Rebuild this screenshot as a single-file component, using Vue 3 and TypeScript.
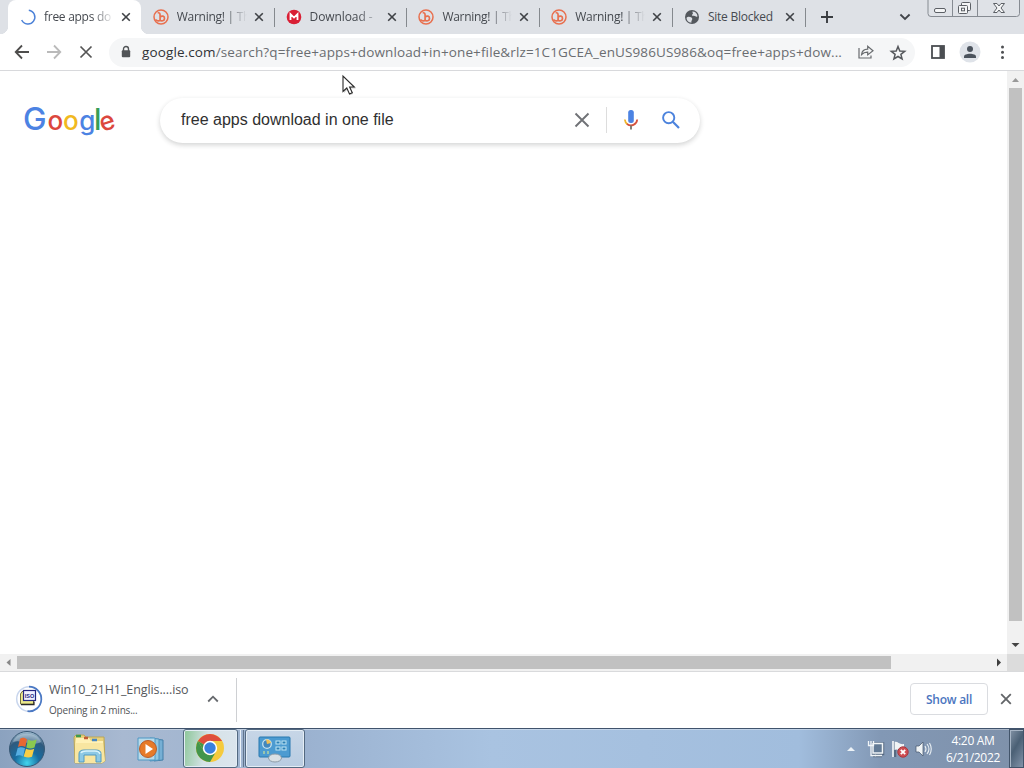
<script setup lang="ts">
interface Tab {
  icon: 'spinner' | 'bit' | 'mega' | 'globe'
  title: string
  kind: string
}

const tabs: Tab[] = [
  { icon: 'spinner', title: 'free apps do', kind: 'active' },
  { icon: 'bit', title: 'Warning! | Th', kind: '' },
  { icon: 'mega', title: 'Download - ', kind: 'download' },
  { icon: 'bit', title: 'Warning! | Th', kind: '' },
  { icon: 'bit', title: 'Warning! | Th', kind: '' },
  { icon: 'globe', title: 'Site Blocked', kind: 'blocked' },
]

const logo = [
  { char: 'G', x: -0.9, y: 28, size: 31.5, color: '#4c83e3', turn: 0 },
  { char: 'o', x: 23.4, y: 28, size: 26, color: '#dc473d', turn: 0 },
  { char: 'o', x: 39, y: 28, size: 26, color: '#f1b91f', turn: 0 },
  { char: 'g', x: 55.2, y: 28, size: 26, color: '#4c83e3', turn: 0 },
  { char: 'l', x: 70, y: 28, size: 29.5, color: '#369d57', turn: 0 },
  { char: 'e', x: 78.2, y: 30, size: 26, color: '#dc473d', turn: -18 },
]
</script>

<template>
  <div class="screen">
    <header class="tabstrip">
      <div v-for="(tab, i) in tabs" :key="i" class="tab" :class="tab.kind">
        <svg class="favicon" viewBox="0 0 16 16">
          <path v-if="tab.icon === 'spinner'" d="M8.8 1.2A6.9 6.9 0 1 1 1.7 11" fill="none" stroke="#4c82d8" stroke-width="1.5" />
          <g v-else-if="tab.icon === 'bit'" fill="none" stroke="#e8704f">
            <circle cx="8" cy="8" r="7" stroke-width="1.5" />
            <path d="M4.700 3.800Q7.300 3.300 7.100 7V11.500M7 8.200C8.800 6.200 11.800 7 11.500 9.600C11.300 12 8.500 12.600 7.100 11C6 12.500 3.800 11.800 2.500 10.500" stroke-width="1.700" />
          </g>
          <g v-else-if="tab.icon === 'mega'">
            <circle cx="8" cy="8" r="7.3" fill="#d91f35" />
            <path d="M4.500 11V5.2L8 8.600L11.500 5.200V11" fill="none" stroke="#fff" stroke-width="1.800" />
          </g>
          <g v-else>
            <circle cx="8" cy="8" r="7" fill="#54585d" />
            <path d="M2.6 8.800C4 6.800 7.700 7.800 8.200 9.500C8.700 11.200 6.800 11.500 7.700 13.600C4.800 13.800 2.400 11.500 2.600 8.800ZM8.400 2.600C11 2.500 13.200 4.600 13.500 7.200C12.200 8.800 11.400 6.500 9.600 6.800C7.800 7 7.400 5.800 8.700 4.900C9.600 4.300 8 3.700 8.400 2.600Z" fill="#dee1e6" />
          </g>
        </svg>
        <span class="tab-title">{{ tab.title }}</span>
        <svg class="tab-close" viewBox="0 0 10 10"><path d="M1.2 1.2L8.8 8.8M8.8 1.2L1.2 8.8" /></svg>
      </div>
      <svg class="new-tab" viewBox="0 0 14 14"><path d="M7 1V13M1 7H13" /></svg>
      <svg class="tab-search" viewBox="0 0 12 8"><path d="M1.4 1.5L6 6L10.6 1.5" /></svg>
      <svg class="window-buttons" viewBox="0 0 94 18">
        <path d="M1 0V13.5Q1 16.5 4 16.5H89.500Q92.500 16.500 92.500 13.500V0" fill="#dfe2e7" stroke="#868b92" />
        <path d="M25.500 0V16M50.500 0V16" stroke="#868b92" />
        <g fill="#f4f5f6" stroke="#5c6066">
          <rect x="7.500" y="8.500" width="11" height="4" rx="1.500" />
          <rect x="34.500" y="2.500" width="9" height="8" rx="1" />
          <rect x="31.500" y="5.500" width="9" height="8" rx="1" />
          <rect x="34.500" y="8.200" width="3" height="2.600" />
          <path d="M66.500 3.500H70L72 6L74 3.500H77.500L74 8L77.500 12.500H74L72 10L70 12.500H66.500L70 8Z" />
        </g>
      </svg>
    </header>

    <nav class="toolbar">
      <svg class="nav-icons" viewBox="0 0 109 36" fill="none" stroke-width="1.8">
        <path d="M29 18H16M22 11.500L15.700 18L22 24.500" stroke="#4e4d4c" />
        <path d="M47 18H60M54 11.500L60.300 18L54 24.500" stroke="#bababa" />
        <path d="M80.500 12.500L91.500 23.500M91.500 12.500L80.500 23.500" stroke="#555" stroke-width="1.700" />
      </svg>
      <div class="omnibox">
        <svg class="lock" viewBox="0 0 10 14"><path d="M2.500 6V4a2.500 2.500 0 0 1 5 0V6" fill="none" stroke="#515457" stroke-width="1.400" /><rect x=".8" y="5.300" width="8.400" height="7" rx="1" fill="#515457" /></svg>
        <span class="url"><b>google.com</b>/search?q=free+apps+download+in+one+file&amp;rlz=1C1GCEA_enUS986US986&amp;oq=free+apps+dow...</span>
        <svg class="share" viewBox="0 0 16 16" fill="none" stroke="#686b6e" stroke-width="1.200"><path d="M1 4V14H13V11.500M3.600 10.500C4 6.600 6.400 5.300 9.700 5.200V2.300L15 6.800L9.700 10.900V8.100C7 8 5.200 8.800 3.600 10.500Z" /></svg>
        <svg class="star" viewBox="0 0 16 16"><path d="M8 1.500L9.800 6L14.700 6.300L10.900 9.400L12.100 14L8 11.500L3.900 14L5.100 9.400L1.300 6.300L6.200 6Z" fill="none" stroke="#55585c" stroke-width="1.500" /></svg>
      </div>
      <svg class="toolbar-icons" viewBox="0 0 109 36">
        <rect x="17" y="12" width="12" height="12" fill="#fff" stroke="#4b4e52" stroke-width="1.800" />
        <rect x="24.500" y="12" width="4.500" height="12" fill="#4b4e52" />
        <circle cx="55" cy="18" r="10.500" fill="#dfe3e9" />
        <circle cx="55" cy="15" r="3" fill="#4b535d" />
        <path d="M49 24V22.500C49 18.800 61 18.800 61 22.500V24Z" fill="#4b535d" />
        <circle cx="87.500" cy="13" r="1.500" fill="#4e5053" /><circle cx="87.500" cy="18.300" r="1.500" fill="#4e5053" /><circle cx="87.500" cy="23.500" r="1.500" fill="#4e5053" />
      </svg>
    </nav>

    <main class="viewport">
      <section class="page">
        <svg class="logo" viewBox="0 0 96 40">
          <text><tspan v-for="(l, i) in logo" :key="i" :x="l.x" :y="l.y" :rotate="l.turn" :font-size="l.size" :fill="l.color">{{ l.char }}</tspan></text>
        </svg>
        <div class="search-box">
          <span class="query">free apps download in one file</span>
          <svg class="clear" viewBox="0 0 16 16"><path d="M1.500 1.500L14.500 14.500M14.500 1.500L1.500 14.500" stroke="#707276" stroke-width="1.900" /></svg>
          <i class="divider"></i>
          <svg class="mic" viewBox="0 0 16 22">
            <rect x="5.200" y="1" width="5.600" height="13" rx="2.500" fill="#4c83e3" />
            <path d="M1.800 10.500Q2.100 13.500 4.500 15.300" fill="none" stroke="#efb42c" stroke-width="1.800" />
            <path d="M4 15C8 18 13.700 16 14.200 10.500" fill="none" stroke="#d5523d" stroke-width="1.800" />
            <path d="M8 16.500V20.500" stroke="#77746a" stroke-width="1.800" />
          </svg>
          <svg class="magnifier" viewBox="0 0 20 20"><circle cx="7.700" cy="7.700" r="5.600" fill="none" stroke="#4c83dd" stroke-width="1.900" /><path d="M11.800 11.800L18 18" stroke="#4c83dd" stroke-width="2.200" /></svg>
        </div>
      </section>
      <aside class="vscroll">
        <svg viewBox="0 0 17 17"><path d="M5 11L8.500 7L12 11Z" fill="#999" /></svg>
        <i class="vthumb"></i>
        <svg viewBox="0 0 17 17"><path d="M4.500 6H12.500L8.500 10Z" fill="#444" /></svg>
      </aside>
      <svg class="pointer" viewBox="0 0 16 22">
        <path d="M2 3V18L5.500 14.500L8.500 20L11 19L8.500 13.500H14Z" fill="#777" opacity=".35" />
        <path d="M1 1V16.500L4.800 13L7.500 19L10.300 17.700L7.600 12H12.300Z" fill="#fff" stroke="#292929" stroke-width="1.100" />
      </svg>
    </main>
    <div class="hscroll">
      <svg viewBox="0 0 17 17"><path d="M10.500 5V12L6.500 8.500Z" fill="#888" /></svg>
      <i class="hthumb"></i>
      <svg viewBox="0 0 17 17"><path d="M7 4.500V12.500L11 8.500Z" fill="#3d3d3d" /></svg>
      <i class="corner"></i>
    </div>

    <section class="downloads">
      <svg class="iso" viewBox="0 0 28 28">
        <circle cx="14" cy="14" r="12.300" fill="#fff" stroke="#c9d6ed" stroke-width="1.500" />
        <path d="M14 1.700A12.300 12.300 0 1 1 12.500 26.200" fill="none" stroke="#4b79c4" stroke-width="1.700" />
        <path d="M5.500 9V19H18.500V15H9V6.500H7Z" fill="#ece98b" stroke="#77723d" />
        <path d="M6 19.700H19V16.500" fill="none" stroke="#292929" stroke-width="1.200" />
        <rect x="8.500" y="5.500" width="12" height="10" fill="#eef0ff" stroke="#242681" stroke-width="1.200" />
        <text x="14.500" y="12.800" text-anchor="middle">ISO</text>
      </svg>
      <div class="file"><span class="filename">Win10_21H1_Englis....iso</span><span class="status">Opening in 2 mins...</span></div>
      <svg class="chevron" viewBox="0 0 12 8"><path d="M1.200 6.500L6 1.700L10.800 6.500" /></svg>
      <i class="download-rule"></i>
      <button class="show-all">Show all</button>
      <svg class="shelf-close" viewBox="0 0 12 12"><path d="M1.200 1.200L10.800 10.800M10.800 1.200L1.200 10.800" /></svg>
    </section>

    <footer class="taskbar">
      <div class="start">
        <svg viewBox="0 0 38 38">
          <defs>
            <radialGradient id="orb" cx=".5" cy=".9" r=".9"><stop stop-color="#42d5ed" /><stop offset=".4" stop-color="#176ca0" /><stop offset=".75" stop-color="#305a7d" /><stop offset="1" stop-color="#a9c5d8" /></radialGradient>
          </defs>
          <circle cx="19" cy="19" r="17.500" fill="url(#orb)" stroke="#375875" />
          <path d="M5 12C8 1 30 1 33 12C25 17 13 9 5 12Z" fill="#d9e7ef" opacity=".4" />
          <path d="M12 9C15 7 17 8 19 9.300L17.300 17C15 15.500 12.500 15.500 10 17Z" fill="#e86832" />
          <path d="M20 9.500C23 11.300 26 10.800 28.700 9.500L26.500 17.500C23 19 21 18.500 18.300 17.500Z" fill="#8bc950" />
          <path d="M9.700 18C12 16.700 14.500 17 17 18.300L15 26.500C12.500 24.700 10 25 7.500 26.300Z" fill="#56aee2" />
          <path d="M18 18.700C21 20.200 23.500 20 26.200 18.700L24 26.800C21 28 18.500 27.500 15.700 26.500Z" fill="#f8ce45" />
        </svg>
      </div>
      <svg class="explorer" viewBox="0 0 36 34">
        <path d="M2 3L4 1H12L14 3H32L33 27L30 29H3Z" fill="#e8d17b" stroke="#b9a65a" />
        <path d="M4 4H17L19 7H31V11H3Z" fill="#fff1b6" />
        <path d="M4 2H9" stroke="#3d9a50" stroke-width="2.500" /><path d="M12 4H16" stroke="#c25a35" stroke-width="2.500" /><path d="M20 6H25" stroke="#4787c2" stroke-width="2.500" />
        <path d="M3 9H31L33 27L30 29H3Z" fill="#f8e6a1" />
        <path d="M7 28V20Q7 16 12 16H24Q29 16 29 20V28H24V21H12V28Z" fill="#8dc9e5" stroke="#4e99c2" />
        <path d="M9 19Q10 17 14 17H23Q27 17 28 20" stroke="#d9f3fb" fill="none" stroke-width="1.500" />
      </svg>
      <svg class="player" viewBox="0 0 30 28">
        <path d="M17 4L26 5V25L17 26Z" fill="#76afd4" stroke="#427fa9" />
        <path d="M13 3L22 4V25L13 26Z" fill="#94c8e1" stroke="#4e93bd" />
        <path d="M1 3H18V25H1Z" fill="#b9dbea" stroke="#4e98c4" />
        <circle cx="11" cy="14" r="8.500" fill="#e77b29" stroke="#b95d2b" /><path d="M8.500 9L16 14L8.500 19Z" fill="#fff" />
      </svg>
      <div class="task chrome-task">
        <svg viewBox="0 0 30 30">
          <circle cx="15" cy="15" r="14" fill="#f5ca3d" />
          <path d="M15 15L2.900 8A14 14 0 0 1 27.100 8H15Z" fill="#df4f3c" />
          <path d="M2.900 8A14 14 0 0 0 15 29L21.100 18.500A7 7 0 0 1 9 18.500Z" fill="#42954b" />
          <path d="M2.900 8L9 18.500L15 15Z" fill="#42954b" />
          <circle cx="15" cy="15" r="7.200" fill="#fff" /><circle cx="15" cy="15" r="5.700" fill="#3980de" />
        </svg>
      </div>
      <div class="task control-task">
        <svg viewBox="0 0 34 30">
          <rect x="1" y="3" width="31" height="20" rx="1" fill="#4c9bd1" stroke="#2978af" />
          <circle cx="9" cy="10" r="4.300" fill="#4287bd" stroke="#c6e2ef" stroke-width="1.300" /><path d="M9 10L8 5.500A4.500 4.500 0 0 1 13 9Z" fill="#efbf58" />
          <g fill="#2b80b6" stroke="#bfe5f3"><rect x="18" y="7" width="4" height="3" /><rect x="24" y="7" width="4" height="3" /><rect x="18" y="13" width="4" height="3" /><rect x="24" y="13" width="4" height="3" /></g>
          <path d="M6 17V20M10 17V20" stroke="#b1d4a4" stroke-width="1.500" />
          <ellipse cx="17" cy="24" rx="6.500" ry="4" fill="#dae1e5" stroke="#8e9ca7" />
        </svg>
      </div>
      <svg class="tray" viewBox="0 0 90 24">
        <path d="M2 14H10L6 10Z" fill="#edf3f7" />
        <g stroke="#34465a" stroke-width="2.500" fill="none" opacity=".55"><path d="M28 6.500H38V17H28ZM28 19H37" /><path d="M50 5V20" /></g>
        <path d="M28 6.500H37.500V16H28ZM30 18.500H37" fill="#637b96" stroke="#f1f5f8" stroke-width="1.500" />
        <path d="M23.500 4V8.500H28.500V4M26 4V8.500M26 8.500V18.500H31" fill="none" stroke="#f1f5f8" stroke-width="1.300" />
        <path d="M48 4V20" stroke="#fff" stroke-width="1.500" /><path d="M49.500 5C52.500 4 54.500 8 59 7V14C55 15 53 11 49.500 13Z" fill="#f1f4f6" />
        <circle cx="58" cy="15" r="5.200" fill="#cf4e53" stroke="#a83840" /><path d="M55.800 12.800L60.200 17.200M60.200 12.800L55.800 17.200" stroke="#fff" stroke-width="1.800" />
        <path d="M71 9H74L78 5V19L74 15H71Z" fill="#eff3f5" stroke="#43556a" stroke-width=".7" />
        <path d="M80 9Q82 12 80 15M82 7Q86 12 82 17M84.500 6Q88 12 84.500 18" fill="none" stroke="#eaf0f4" stroke-width="1.100" />
      </svg>
      <div class="clock"><span>4:20 AM</span><span>6/21/2022</span></div>
      <i class="desktop-button"></i>
    </footer>
  </div>
</template>

<style>
body { overflow: hidden; background: #fff; }
</style>
<style scoped>
* { box-sizing: border-box; }
.screen { width: 1024px; height: 768px; display: flex; flex-direction: column; font-family: "Open Sans", "Noto Sans", sans-serif; background: #fff; overflow: hidden; }
svg { display: block; flex: none; overflow: visible; }
.tabstrip { height: 34px; display: flex; align-items: center; padding-left: 8px; background: #dee1e6; flex: none; }
.tab { width: 132.800px; height: 34px; display: flex; align-items: center; padding-left: 12px; position: relative; flex: none; }
.tab:not(.active)::after { content: ''; position: absolute; right: -1px; top: 8px; width: 1px; height: 19px; background: #85898e; }
.active { background: #fff; border-radius: 8px 8px 0 0; }
.active::before { content: ''; position: absolute; left: -8px; bottom: 0; width: 8px; height: 8px; background: radial-gradient(circle at 0 0, transparent 8px, #fff 8.500px); }
.active::after { content: ''; position: absolute; right: -8px; bottom: 0; width: 8px; height: 8px; background: radial-gradient(circle at 100% 0, transparent 8px, #fff 8.500px); }
.favicon { width: 16px; height: 16px; }
.tab-title { width: 73px; margin-left: 8px; white-space: nowrap; color: #45494f; font-size: 12px; line-height: 18px; letter-spacing: -.28px; -webkit-mask-image: linear-gradient(90deg, #000 48px, transparent 70px); mask-image: linear-gradient(90deg, #000 48px, transparent 70px); }
.blocked .tab-title { -webkit-mask-image: none; mask-image: none; letter-spacing: -.25px; }
.download .tab-title { letter-spacing: -.1px; }
.tab-close { width: 10px; height: 10px; margin-left: 4px; fill: none; stroke: #3f4246; stroke-width: 1.600; }
.new-tab { width: 14px; height: 14px; margin-left: 15.200px; fill: none; stroke: #393c40; stroke-width: 1.900; }
.tab-search { width: 12px; height: 8px; margin-left: 65px; fill: none; stroke: #414449; stroke-width: 1.800; }
.window-buttons { width: 94px; height: 18px; align-self: flex-start; margin-left: 16px; }
.toolbar { height: 37px; display: flex; align-items: flex-start; border-bottom: 1px solid #d8d9dc; flex: none; }
.nav-icons { width: 109px; height: 36px; }
.omnibox { width: 806px; height: 29px; margin-top: 4px; border-radius: 15px; background: #f5f6f7; display: flex; align-items: center; padding-left: 12px; }
.lock { width: 10px; height: 14px; margin-bottom: 2px; }
.url { width: 706px; margin-left: 11px; margin-bottom: 2px; font-size: 13.500px; line-height: 20px; color: #6a6d71; white-space: nowrap; letter-spacing: .12px; }
.url b { font-weight: 400; color: #303236; }
.share { width: 16px; height: 16px; margin-left: 10px; margin-bottom: 2px; }
.star { width: 16px; height: 16px; margin-left: 16px; }
.toolbar-icons { width: 109px; height: 36px; }
.viewport { height: 583px; display: flex; position: relative; flex: none; }
.page { width: 1007px; display: flex; align-items: flex-start; padding: 27px 0 0 24px; }
.logo { width: 96px; height: 40px; margin-top: 4px; }
.logo text { font-family: Inter, sans-serif; font-weight: 500; }
.search-box { width: 540px; height: 45px; margin-left: 40px; padding: 0 0 2px 21px; display: flex; align-items: center; border-radius: 23px; background: #fff; box-shadow: 0 2px 5px rgba(32,33,36,.2); }
.query { width: 393px; font: 16px/24px "Liberation Sans", Arial, sans-serif; color: #303030; white-space: nowrap; }
.clear { width: 16px; height: 16px; }
.divider { width: 1px; height: 26px; margin-left: 16px; background: #ddd; }
.mic { width: 16px; height: 22px; margin-left: 16px; }
.magnifier { width: 20px; height: 20px; margin-left: 22px; }
.vscroll { width: 17px; background: #f1f1f1; display: flex; flex-direction: column; align-items: center; }
.vscroll svg, .hscroll svg { width: 17px; height: 17px; }
.vthumb { width: 13px; height: 533px; background: #c1c1c1; margin-bottom: 16px; }
.pointer { position: absolute; left: 342px; top: 4px; width: 16px; height: 22px; }
.hscroll { height: 17px; display: flex; align-items: center; background: #f1f1f1; flex: none; }
.hthumb { width: 874px; height: 13px; background: #c1c1c1; margin-right: 99px; }
.corner { width: 17px; height: 17px; background: #dcdcdc; }
.downloads { height: 57px; display: flex; align-items: center; padding: 0 0 2px 15px; border-top: 1px solid #d9dadc; flex: none; }
.iso { width: 28px; height: 28px; }
.iso text { font: bold 5.500px "Liberation Sans", sans-serif; fill: #242681; }
.file { width: 158px; margin-left: 6px; padding-top: 2px; display: flex; flex-direction: column; white-space: nowrap; color: #55585c; }
.filename { font-size: 12.500px; line-height: 20px; letter-spacing: -.09px; }
.status { font-size: 10px; line-height: 20px; letter-spacing: -.2px; color: #505357; }
.chevron { width: 12px; height: 8px; fill: none; stroke: #66696d; stroke-width: 1.800; }
.download-rule { width: 1px; height: 44px; margin: 2px 0 0 17px; background: #ced0d3; }
.show-all { width: 78px; height: 32px; margin-left: 673px; padding: 0; background: #fff; border: 1px solid #dadce0; border-radius: 4px; font: 600 12px "Open Sans", sans-serif; letter-spacing: -.25px; color: #4b75c0; }
.shelf-close { width: 12px; height: 12px; margin-left: 12px; fill: none; stroke: #626568; stroke-width: 1.800; }
.taskbar { height: 40px; display: flex; align-items: center; border-top: 1px solid #40536c; background: linear-gradient(90deg, #8ba2bf, #a8b9d1 12%, #9bb2d0 30%, #a9c3e1 48%, #a1bddd 78%, #8298b5 86%, #7f91aa 100%); box-shadow: inset 0 1px rgba(255,255,255,.35); flex: none; }
.start { width: 38px; margin-left: 8px; }
.start svg { width: 38px; height: 38px; }
.explorer { width: 36px; height: 34px; margin-left: 26px; margin-top: 5px; }
.player { width: 30px; height: 28px; margin-left: 29px; }
.task { height: 39px; display: flex; align-items: center; justify-content: center; border: 1px solid #536981; border-radius: 3px; box-shadow: inset 0 0 0 1px #e4edf5; }
.chrome-task { width: 55px; margin-left: 16px; padding: 0 2px 2px 0; background: linear-gradient(100deg, #8bc697, #d5e2e7 42%, #dce5ee); }
.chrome-task svg { width: 30px; height: 30px; }
.control-task { width: 60px; margin-left: 7px; background: linear-gradient(#c7d6e7, #b9cce1); position: relative; }
.control-task::before { content: ''; position: absolute; left: -6px; top: 0; height: 37px; width: 2px; border-left: 1px solid #eaf2f8; border-right: 1px solid #60758d; }
.control-task svg { width: 34px; height: 30px; }
.tray { width: 90px; height: 24px; margin-left: 540px; }
.clock { width: 64px; margin-left: 6px; display: flex; flex-direction: column; align-items: center; color: #fff; font-size: 12px; line-height: 17px; letter-spacing: -.32px; padding-top: 1px; }
.desktop-button { width: 15px; height: 39px; margin-left: auto; border: 1px solid #42546a; box-shadow: inset 1px 1px #a7b5c5; background: linear-gradient(120deg, #8393a6, #4b6075 45%, #8293a9); }
</style>
